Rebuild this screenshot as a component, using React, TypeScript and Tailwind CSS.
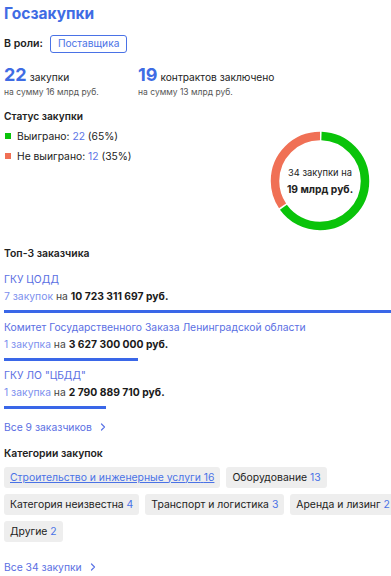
import React from 'react';

const customers = [
    { name: 'ГКУ ЦОДД', count: '7 закупок', sum: '10 723 311 697 руб.', width: 395 },
    { name: 'Комитет Государственного Заказа Ленинградской области', count: '1 закупка', sum: '3 627 300 000 руб.', width: 134 },
    { name: 'ГКУ ЛО "ЦБДД"', count: '1 закупка', sum: '2 790 889 710 руб.', width: 102 },
];

const categories = [
    { name: 'Строительство и инженерные услуги', count: 16, active: true },
    { name: 'Оборудование', count: 13 },
    { name: 'Категория неизвестна', count: 4 },
    { name: 'Транспорт и логистика', count: 3 },
    { name: 'Аренда и лизинг', count: 2 },
    { name: 'Другие', count: 2 },
];

function Chevron() {
    return (
        <svg width="10" height="10" viewBox="0 0 10 10" fill="none" className="ml-[6px]">
            <path d="M3.5 2L6.5 5L3.5 8" stroke="#5b74e6" strokeWidth="1.2" strokeLinecap="round" strokeLinejoin="round" />
        </svg>
    );
}

function Donut() {
    const r = 45;
    const c = 2 * Math.PI * r;
    const gap = 1.5;
    const won = c * 0.65;
    const lost = c * 0.35;
    return (
        <div className="relative w-[100px] h-[100px]">
            <svg width="100" height="100" viewBox="0 0 100 100" className="-rotate-90">
                <circle cx="50" cy="50" r={r} fill="none" stroke="#0ac30a" strokeWidth="8.5"
                    strokeDasharray={`${won - gap} ${c}`} strokeDashoffset={-gap} />
                <circle cx="50" cy="50" r={r} fill="none" stroke="#f07055" strokeWidth="8.5"
                    strokeDasharray={`${lost - gap} ${c}`} strokeDashoffset={-(won + gap)} />
            </svg>
            <div className="absolute inset-0 flex flex-col items-center justify-center text-[#222]">
                <span className="text-[9.3px] leading-[16px]">34 закупки на</span>
                <span className="text-[10.3px] leading-[16px] font-bold">19 млрд руб.</span>
            </div>
        </div>
    );
}

export default function App() {
    return (
        <div className="w-full overflow-hidden bg-white">
            <div className="w-[403px] px-[4px] pt-[3px] pb-[2px] text-[#222] font-['Inter',sans-serif]">
                <h1 className="text-[15.5px] leading-[22px] font-bold text-[#3f6ce4]">Госзакупки</h1>

                <div className="mt-[10px] flex items-center gap-[7px]">
                    <span className="text-[10.6px] font-semibold">В роли:</span>
                    <span className="px-[7px] h-[18px] flex items-center rounded-[3px] border border-[#4a72e6] text-[10.2px] text-[#4a72e6]">Поставщика</span>
                </div>

                <div className="mt-[11px] flex">
                    <div className="w-[134px]">
                        <div className="flex items-baseline gap-[3px]">
                            <span className="text-[18px] leading-[22px] font-bold text-[#3f6ce4]">22</span>
                            <span className="text-[10.2px]">закупки</span>
                        </div>
                        <div className="text-[8.5px] leading-[12px] text-[#555]">на сумму 16 млрд руб.</div>
                    </div>
                    <div>
                        <div className="flex items-baseline gap-[3px]">
                            <span className="text-[18px] leading-[22px] font-bold text-[#3f6ce4]">19</span>
                            <span className="text-[10.2px]">контрактов заключено</span>
                        </div>
                        <div className="text-[8.5px] leading-[12px] text-[#555]">на сумму 13 млрд руб.</div>
                    </div>
                </div>

                <div className="mt-[11px] flex">
                    <div className="flex-1">
                        <div className="text-[10.2px] leading-[14px] font-semibold">Статус закупки</div>
                        <div className="mt-[3px] flex items-center gap-[6px] text-[10.3px] leading-[20px]">
                            <span className="ml-[1px] w-[6px] h-[6px] bg-[#0ac30a]" />
                            <span>Выиграно: <span className="text-[#5b74e6]">22</span> (65%)</span>
                        </div>
                        <div className="flex items-center gap-[6px] text-[10.3px] leading-[20px]">
                            <span className="ml-[1px] w-[6px] h-[6px] bg-[#f07055]" />
                            <span>Не выиграно: <span className="text-[#5b74e6]">12</span> (35%)</span>
                        </div>
                    </div>
                    <div className="mt-[22px] mr-[29px]">
                        <Donut />
                    </div>
                </div>

                <div className="mt-[16px] text-[10.4px] leading-[14px] font-semibold">Топ-3 заказчика</div>
                <div className="mt-[10px] flex flex-col gap-[6px]">
                    {customers.map((c) => (
                        <div key={c.name}>
                            <div className="text-[10.35px] leading-[17px] text-[#5b6fe3]">{c.name}</div>
                            <div className="text-[10.35px] leading-[17px]">
                                <span className="text-[#7d90ee]">{c.count}</span>
                                <span className="text-[#444]"> на </span>
                                <span className="font-bold text-[#1a1a1a]">{c.sum}</span>
                            </div>
                            <div className="mt-[5px] h-[3px] bg-[#3a67e8]" style={{ width: c.width }} />
                        </div>
                    ))}
                </div>

                <div className="mt-[10px] flex items-center text-[10.35px] leading-[16px] text-[#5b6fe3]">
                    Все 9 заказчиков <Chevron />
                </div>

                <div className="mt-[12px] text-[10.4px] leading-[14px] font-semibold">Категории закупок</div>
                <div className="mt-[6px] flex flex-wrap gap-[6px]">
                    {categories.map((c) => (
                        <span key={c.name} className="h-[21px] px-[6px] flex items-center rounded-[3px] bg-[#eeeeee] text-[10.4px]">
                            <span className={c.active ? 'text-[#4a72e6] underline' : 'text-[#222]'}>
                                {c.name} <span className="text-[#4a72e6]">{c.count}</span>
                            </span>
                        </span>
                    ))}
                </div>

                <div className="mt-[17px] flex items-center text-[10.35px] leading-[16px] text-[#5b6fe3]">
                    Все 34 закупки <Chevron />
                </div>
            </div>
        </div>
    );
}
